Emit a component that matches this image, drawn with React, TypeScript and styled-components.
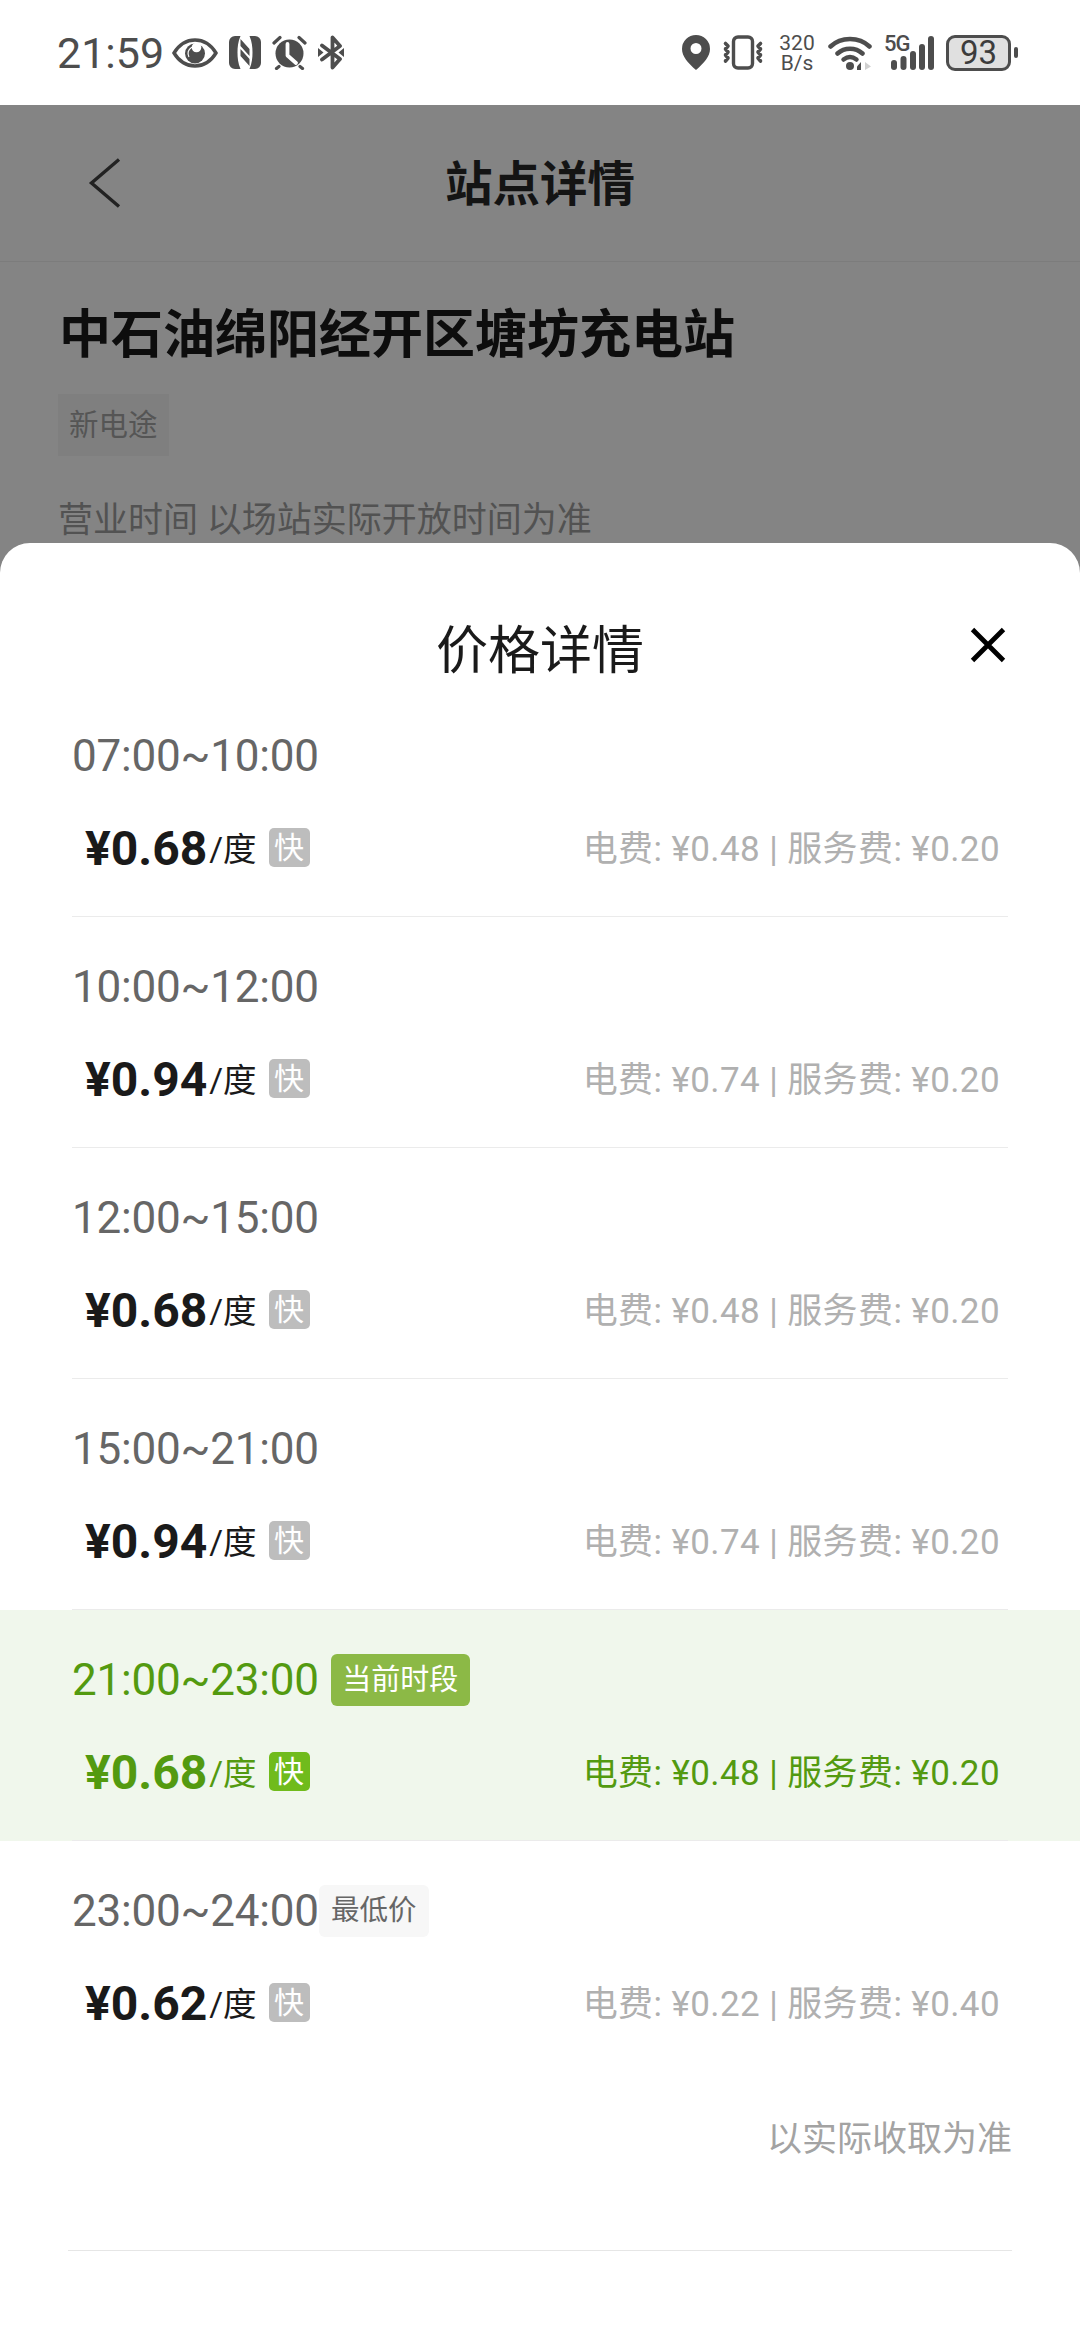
import React from "react";
import styled, { createGlobalStyle } from "styled-components";

const GlobalStyle = createGlobalStyle`
  html, body {
    margin: 0;
    padding: 0;
    background: #848484;
  }
  body {
    font-family: Roboto, "Noto Sans CJK SC", sans-serif;
  }
`;

interface Period {
  time: string;
  price: string;
  power: string;
  service: string;
  tag?: "current" | "lowest";
}

const periods: Period[] = [
  { time: "07:00~10:00", price: "¥0.68", power: "¥0.48", service: "¥0.20" },
  { time: "10:00~12:00", price: "¥0.94", power: "¥0.74", service: "¥0.20" },
  { time: "12:00~15:00", price: "¥0.68", power: "¥0.48", service: "¥0.20" },
  { time: "15:00~21:00", price: "¥0.94", power: "¥0.74", service: "¥0.20" },
  { time: "21:00~23:00", price: "¥0.68", power: "¥0.48", service: "¥0.20", tag: "current" },
  { time: "23:00~24:00", price: "¥0.62", power: "¥0.22", service: "¥0.40", tag: "lowest" },
];

const EyeIcon = () => (
  <StatusSvg width="46" height="30" viewBox="0 0 46 30">
    <path d="M2 15C7.500 6 14 2 23 2S38.500 6 44 15C38.500 24 32 28 23 28S7.500 24 2 15Z" fill="none" stroke="#4d4d4d" strokeWidth="3.400" />
    <circle cx="23" cy="15.500" r="10" fill="#4d4d4d" />
    <circle cx="23" cy="15.500" r="7" fill="none" stroke="#fff" strokeWidth="1.200" strokeDasharray="14 30" transform="rotate(150 23 15.500)" />
    <circle cx="24.500" cy="9.500" r="4.800" fill="#fff" />
  </StatusSvg>
);

const NfcIcon = () => (
  <StatusSvg width="32" height="33" viewBox="0 0 32 33">
    <path d="M6 0h5.500C9 6 8.500 11 8.500 16.500S9 27 11.500 33H6a6 6 0 0 1-6-6V6a6 6 0 0 1 6-6Z" fill="#4d4d4d" />
    <path d="M26 33h-5.500C23 27 23.500 22 23.500 16.500S23 6 20.500 0H26a6 6 0 0 1 6 6v21a6 6 0 0 1-6 6Z" fill="#4d4d4d" />
    <path d="M11.500 3l9 10v7l-9-10ZM11.500 13l9 10v7l-9-10Z" fill="#4d4d4d" />
  </StatusSvg>
);

const AlarmIcon = () => (
  <StatusSvg width="35" height="35" viewBox="0 0 35 35">
    <circle cx="17.500" cy="18.500" r="14" fill="#4d4d4d" />
    <path d="M15.500 9v11.500l8.500 7.500" fill="none" stroke="#fff" strokeWidth="3.800" strokeLinecap="round" strokeLinejoin="round" />
    <path d="M2 8l6-5.500M33 8l-6-5.500M7 31.500l-2.500 2M28 31.500l2.500 2" fill="none" stroke="#4d4d4d" strokeWidth="3.200" strokeLinecap="round" />
  </StatusSvg>
);

const BluetoothIcon = () => (
  <StatusSvg width="26" height="35" viewBox="0 0 26 35">
    <path d="M4 10.500l18 13.500-7.500 8.500V20M4 24.500l18-13.500-7.500-8.500V15" fill="none" stroke="#4d4d4d" strokeWidth="3.800" strokeLinejoin="round" strokeLinecap="round" />
    <path d="M0 13l5.500 4.500L0 22ZM26 13l-5.500 4.500L26 22Z" fill="#4d4d4d" />
  </StatusSvg>
);

const PinIcon = () => (
  <StatusSvg width="28" height="35" viewBox="0 0 28 35">
    <path fillRule="evenodd" d="M14 35C6 28 0 21.500 0 14a14 14 0 0 1 28 0c0 7.500-6 14-14 21Zm0-16a5.500 5.500 0 1 0 0-11 5.500 5.500 0 0 0 0 11Z" fill="#4d4d4d" />
  </StatusSvg>
);

const VibrateIcon = () => (
  <StatusSvg width="42" height="35" viewBox="0 0 42 35">
    <rect x="11.500" y="2" width="19" height="31" rx="4.500" fill="none" stroke="#4d4d4d" strokeWidth="3.400" />
    <path d="M3.500 8.500l2.500 2.500-2.500 3 2.500 3-2.500 3 2.500 3-2.500 3M38.500 8.500L36 11l2.500 3-2.500 3 2.500 3-2.500 3 2.500 3" fill="none" stroke="#4d4d4d" strokeWidth="3.600" strokeLinecap="round" strokeLinejoin="round" />
  </StatusSvg>
);

const WifiIcon = () => (
  <StatusSvg width="44" height="35" viewBox="0 0 44 35">
    <path d="M2.500 11.500C13 1.500 31 1.500 41.500 11.500M9.500 18.500C16.500 12 27.500 12 34.500 18.500" fill="none" stroke="#4d4d4d" strokeWidth="4.500" strokeLinecap="round" />
    <path d="M15.500 24.500C19.500 21.500 24.500 21.500 28.500 24.500" fill="none" stroke="#4d4d4d" strokeWidth="4.500" strokeLinecap="round" />
    <circle cx="22" cy="31" r="4" fill="#4d4d4d" />
    <path d="M29 31.500l4-4.500v8h-4Z" fill="#4d4d4d" />
    <path d="M37 27l6 4.500-6 3.500Z" fill="#d0d0d0" />
  </StatusSvg>
);

const SignalIcon = () => (
  <StatusSvg width="43" height="34" viewBox="0 0 43 34">
    <rect x="0" y="24" width="6" height="10" rx="3" fill="#4d4d4d" />
    <rect x="9.500" y="20" width="6" height="14" rx="3" fill="#4d4d4d" />
    <rect x="19" y="15" width="6" height="19" rx="3" fill="#4d4d4d" />
    <rect x="28" y="8" width="6" height="26" rx="3" fill="#4d4d4d" />
    <rect x="37" y="0" width="6" height="34" rx="3" fill="#4d4d4d" />
  </StatusSvg>
);

const ChevronIcon = () => (
  <svg width="34" height="50" viewBox="0 0 34 50">
    <path d="M31 1.500L3.500 25 31 48.500" fill="none" stroke="#222" strokeWidth="3.400" />
  </svg>
);

const CloseIcon = () => (
  <svg width="36" height="36" viewBox="0 0 36 36">
    <path d="M2.500 2.500l31 31M33.500 2.500l-31 31" fill="none" stroke="#000" strokeWidth="4.800" />
  </svg>
);

export default function App() {
  return (
    <>
      <GlobalStyle />
      <Page>
        <StatusBar>
          <StatusGroup $gap={11}>
            <Clock>21:59</Clock>
            <EyeIcon />
            <NfcIcon />
            <AlarmIcon />
            <BluetoothIcon />
          </StatusGroup>
          <StatusGroup $gap={12}>
            <PinIcon />
            <VibrateIcon />
            <NetSpeed>
              <span>320</span>
              <span>B/s</span>
            </NetSpeed>
            <WifiIcon />
            <Cellular>
              <CellLabel>5G</CellLabel>
              <SignalIcon />
            </Cellular>
            <Battery>
              <BatteryBody>93</BatteryBody>
              <BatteryNub />
            </Battery>
          </StatusGroup>
        </StatusBar>

        <NavBar>
          <BackButton>
            <ChevronIcon />
          </BackButton>
          <NavTitle>站点详情</NavTitle>
        </NavBar>

        <StationInfo>
          <StationName>中石油绵阳经开区塘坊充电站</StationName>
          <OperatorTag>新电途</OperatorTag>
          <Hours>营业时间 以场站实际开放时间为准</Hours>
        </StationInfo>

        <Sheet>
          <SheetHeader>
            <SheetTitle>价格详情</SheetTitle>
            <CloseButton>
              <CloseIcon />
            </CloseButton>
          </SheetHeader>

          <PeriodList>
            {periods.map((p, i) => {
              const active = p.tag === "current";
              return (
                <PeriodRow key={p.time} $active={active}>
                  <PeriodInner $last={i === periods.length - 1}>
                    <TimeLine>
                      <TimeText $active={active}>{p.time}</TimeText>
                      {p.tag === "current" && <CurrentTag>当前时段</CurrentTag>}
                      {p.tag === "lowest" && <LowestTag>最低价</LowestTag>}
                    </TimeLine>
                    <PriceLine>
                      <PriceGroup>
                        <Price $active={active}>{p.price}</Price>
                        <Unit $active={active}>/度</Unit>
                        <FastBadge $active={active}>快</FastBadge>
                      </PriceGroup>
                      <Breakdown $active={active}>
                        电费: {p.power} | 服务费: {p.service}
                      </Breakdown>
                    </PriceLine>
                  </PeriodInner>
                </PeriodRow>
              );
            })}
          </PeriodList>

          <Footnote>以实际收取为准</Footnote>
          <BottomRule />
        </Sheet>
      </Page>
    </>
  );
}

const Page = styled.div`
  position: relative;
  width: 1080px;
  height: 2340px;
  overflow: hidden;
  background: #848484;
`;

const StatusBar = styled.div`
  display: flex;
  justify-content: space-between;
  align-items: center;
  box-sizing: border-box;
  height: 105px;
  padding: 0 62px 0 57px;
  background: #fff;
`;

const StatusGroup = styled.div<{ $gap: number }>`
  display: flex;
  align-items: center;
  gap: ${({ $gap }) => $gap}px;
`;

const StatusSvg = styled.svg`
  display: block;
  flex: none;
`;

const Clock = styled.span`
  font-size: 43px;
  line-height: 48px;
  color: #4d4d4d;
  margin-right: -3px;
`;

const NetSpeed = styled.div`
  display: flex;
  flex-direction: column;
  align-items: center;
  width: 38px;
  font-size: 21px;
  line-height: 20px;
  color: #4d4d4d;
  margin: 0 0 0 2px;
`;

const Cellular = styled.div`
  position: relative;
  width: 50px;
  height: 34px;
  display: flex;
  justify-content: flex-end;
`;

const CellLabel = styled.span`
  position: absolute;
  left: 0;
  top: -1px;
  font-size: 22px;
  line-height: 18px;
  font-weight: 500;
  letter-spacing: -1px;
  color: #4d4d4d;
`;

const Battery = styled.div`
  display: flex;
  align-items: center;
  gap: 3px;
`;

const BatteryBody = styled.div`
  box-sizing: border-box;
  width: 65px;
  height: 36px;
  border: 3px solid #4d4d4d;
  border-radius: 9px;
  background: #e0e0e0;
  font-size: 33px;
  line-height: 30px;
  text-align: center;
  color: #3c3c3c;
`;

const BatteryNub = styled.div`
  width: 4px;
  height: 11px;
  border-radius: 2px;
  background: #4d4d4d;
`;

const NavBar = styled.div`
  position: relative;
  display: flex;
  align-items: center;
  justify-content: center;
  height: 156px;
  border-bottom: 1px solid #7c7c7c;
`;

const BackButton = styled.div`
  position: absolute;
  left: 88px;
  top: 53px;
  line-height: 0;
`;

const NavTitle = styled.div`
  font-size: 47.500px;
  line-height: 68px;
  margin-top: 4px;
  font-weight: 700;
  color: #141414;
`;

const StationInfo = styled.div`
  padding: 40px 58px 0;
  display: flex;
  flex-direction: column;
  align-items: flex-start;
`;

const StationName = styled.div`
  font-size: 52px;
  line-height: 68px;
  font-weight: 700;
  color: #0d0d0d;
  margin-left: 1px;
`;

const OperatorTag = styled.div`
  margin-top: 24px;
  padding: 0 11px;
  height: 62px;
  line-height: 62px;
  background: #7f7f7f;
  font-size: 29.500px;
  color: #555;
`;

const Hours = styled.div`
  margin-top: 41px;
  font-size: 35px;
  line-height: 48px;
  color: #525252;
`;

const Sheet = styled.div`
  position: absolute;
  left: 0;
  right: 0;
  top: 543px;
  bottom: 0;
  background: #fff;
  border-radius: 30px 30px 0 0;
`;

const SheetHeader = styled.div`
  position: relative;
  display: flex;
  justify-content: center;
  padding-top: 67px;
  height: 76px;
`;

const SheetTitle = styled.div`
  font-size: 52px;
  line-height: 76px;
  margin-top: 4px;
  color: #1a1a1a;
`;

const CloseButton = styled.div`
  position: absolute;
  right: 74px;
  top: 84px;
  line-height: 0;
`;

const PeriodList = styled.div`
  margin-top: 0;
`;

const PeriodRow = styled.div<{ $active: boolean }>`
  background: ${({ $active }) => ($active ? "#f0f7ec" : "transparent")};
`;

const PeriodInner = styled.div<{ $last: boolean }>`
  box-sizing: border-box;
  height: 231px;
  margin: 0 72px;
  padding-top: 44px;
  border-bottom: 1px solid ${({ $last }) => ($last ? "transparent" : "#ebebeb")};
`;

const TimeLine = styled.div`
  display: flex;
  align-items: center;
  height: 52px;
`;

const TimeText = styled.span<{ $active: boolean }>`
  font-size: 44px;
  letter-spacing: -0.2px;
  color: ${({ $active }) => ($active ? "#539a10" : "#666")};
`;

const CurrentTag = styled.span`
  margin-left: 12px;
  width: 139px;
  height: 52px;
  line-height: 52px;
  text-align: center;
  border-radius: 6px;
  background: #8cb946;
  font-size: 29px;
  color: #fff;
`;

const LowestTag = styled.span`
  margin-left: 0;
  width: 110px;
  height: 52px;
  line-height: 52px;
  text-align: center;
  border-radius: 6px;
  background: #f7f7f7;
  font-size: 28.500px;
  color: #666;
`;

const PriceLine = styled.div`
  display: flex;
  align-items: center;
  justify-content: space-between;
  height: 56px;
  margin-top: 38px;
  padding: 0 8px 0 13px;
`;

const PriceGroup = styled.div`
  display: flex;
  align-items: center;
`;

const Price = styled.span<{ $active: boolean }>`
  font-size: 48px;
  font-weight: 700;
  color: ${({ $active }) => ($active ? "#539a10" : "#1a1a1a")};
`;

const Unit = styled.span<{ $active: boolean }>`
  margin: 0 0 3px 2px;
  font-size: 33.500px;
  color: ${({ $active }) => ($active ? "#539a10" : "#1a1a1a")};
`;

const FastBadge = styled.span<{ $active: boolean }>`
  margin: 0 0 1px 12px;
  width: 41px;
  height: 39px;
  line-height: 39px;
  text-align: center;
  border-radius: 5px;
  background: ${({ $active }) => ($active ? "#70bb1c" : "#bdbdbd")};
  font-size: 30px;
  color: #fff;
`;

const Breakdown = styled.span<{ $active: boolean }>`
  margin-bottom: 5px;
  font-size: 35px;
  letter-spacing: 0.4px;
  color: ${({ $active }) => ($active ? "#539a10" : "#b0b0b0")};
`;

const Footnote = styled.div`
  margin: 0 68px 0 0;
  padding-top: 44px;
  text-align: right;
  font-size: 35px;
  line-height: 48px;
  color: #a3a3a3;
`;

const BottomRule = styled.div`
  margin: 86px 68px 0 68px;
  height: 1px;
  background: #e6e6e6;
`;
